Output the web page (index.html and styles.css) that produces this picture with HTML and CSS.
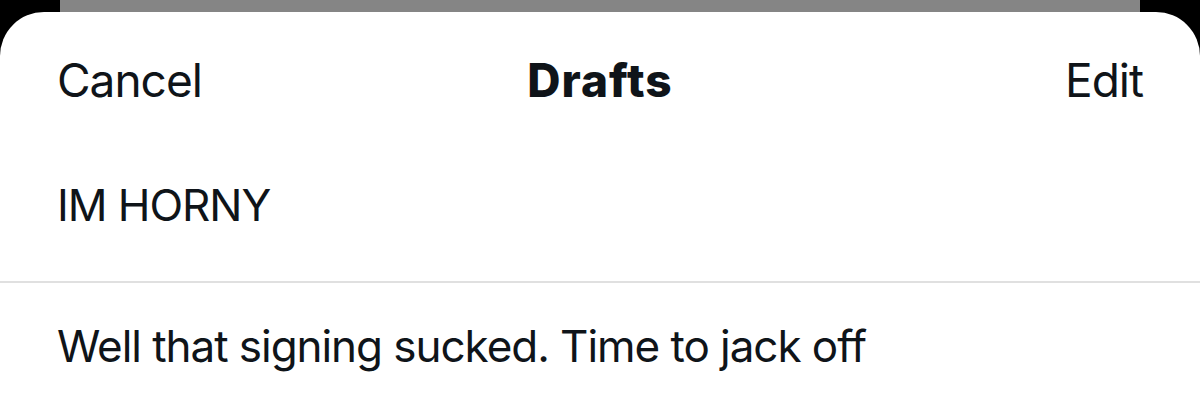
FILE: index.html
```html
<!DOCTYPE html>
<html>
<head>
<meta charset="utf-8">
<link rel="stylesheet" href="styles.css">
</head>
<body>
<div class="screen">
  <div class="backdrop"></div>
  <div class="sheet">
    <header class="nav">
      <span class="nav-btn">Cancel</span>
      <span class="nav-title">Drafts</span>
      <span class="nav-btn nav-right">Edit</span>
    </header>
    <ul class="drafts">
      <li class="draft">IM HORNY</li>
      <li class="draft">Well that signing sucked. Time to jack off</li>
    </ul>
  </div>
</div>
</body>
</html>
```
FILE: styles.css
```css
html, body {
  margin: 0;
  padding: 0;
  background: #000;
}
.screen {
  width: 1200px;
  height: 417px;
  display: flex;
  flex-direction: column;
  overflow: hidden;
  font-family: Inter, "Liberation Sans", sans-serif;
  color: #0f1419;
}
.backdrop {
  height: 12px;
  margin: 0 60px;
  background: #858585;
  flex: none;
}
.sheet {
  flex: 1;
  background: #fff;
  border-radius: 44px 44px 0 0;
  display: flex;
  flex-direction: column;
}
.nav {
  display: grid;
  grid-template-columns: 1fr auto 1fr;
  align-items: center;
  padding: 42px 57px 35px 57px;
  line-height: 53px;
}
.nav-btn {
  font-size: 46px;
  font-weight: 400;
  letter-spacing: -1px;
}
.nav-right {
  justify-self: end;
}
.nav-title {
  font-size: 46px;
  font-weight: 800;
  letter-spacing: 1px;
}
.drafts {
  list-style: none;
  margin: 0;
  padding: 0;
}
.draft {
  padding: 37px 57px 49px;
  font-size: 44px;
  line-height: 53px;
  letter-spacing: -1.05px;
}
.draft + .draft {
  border-top: 2px solid #e0e0e0;
  padding-top: 37px;
}
```
